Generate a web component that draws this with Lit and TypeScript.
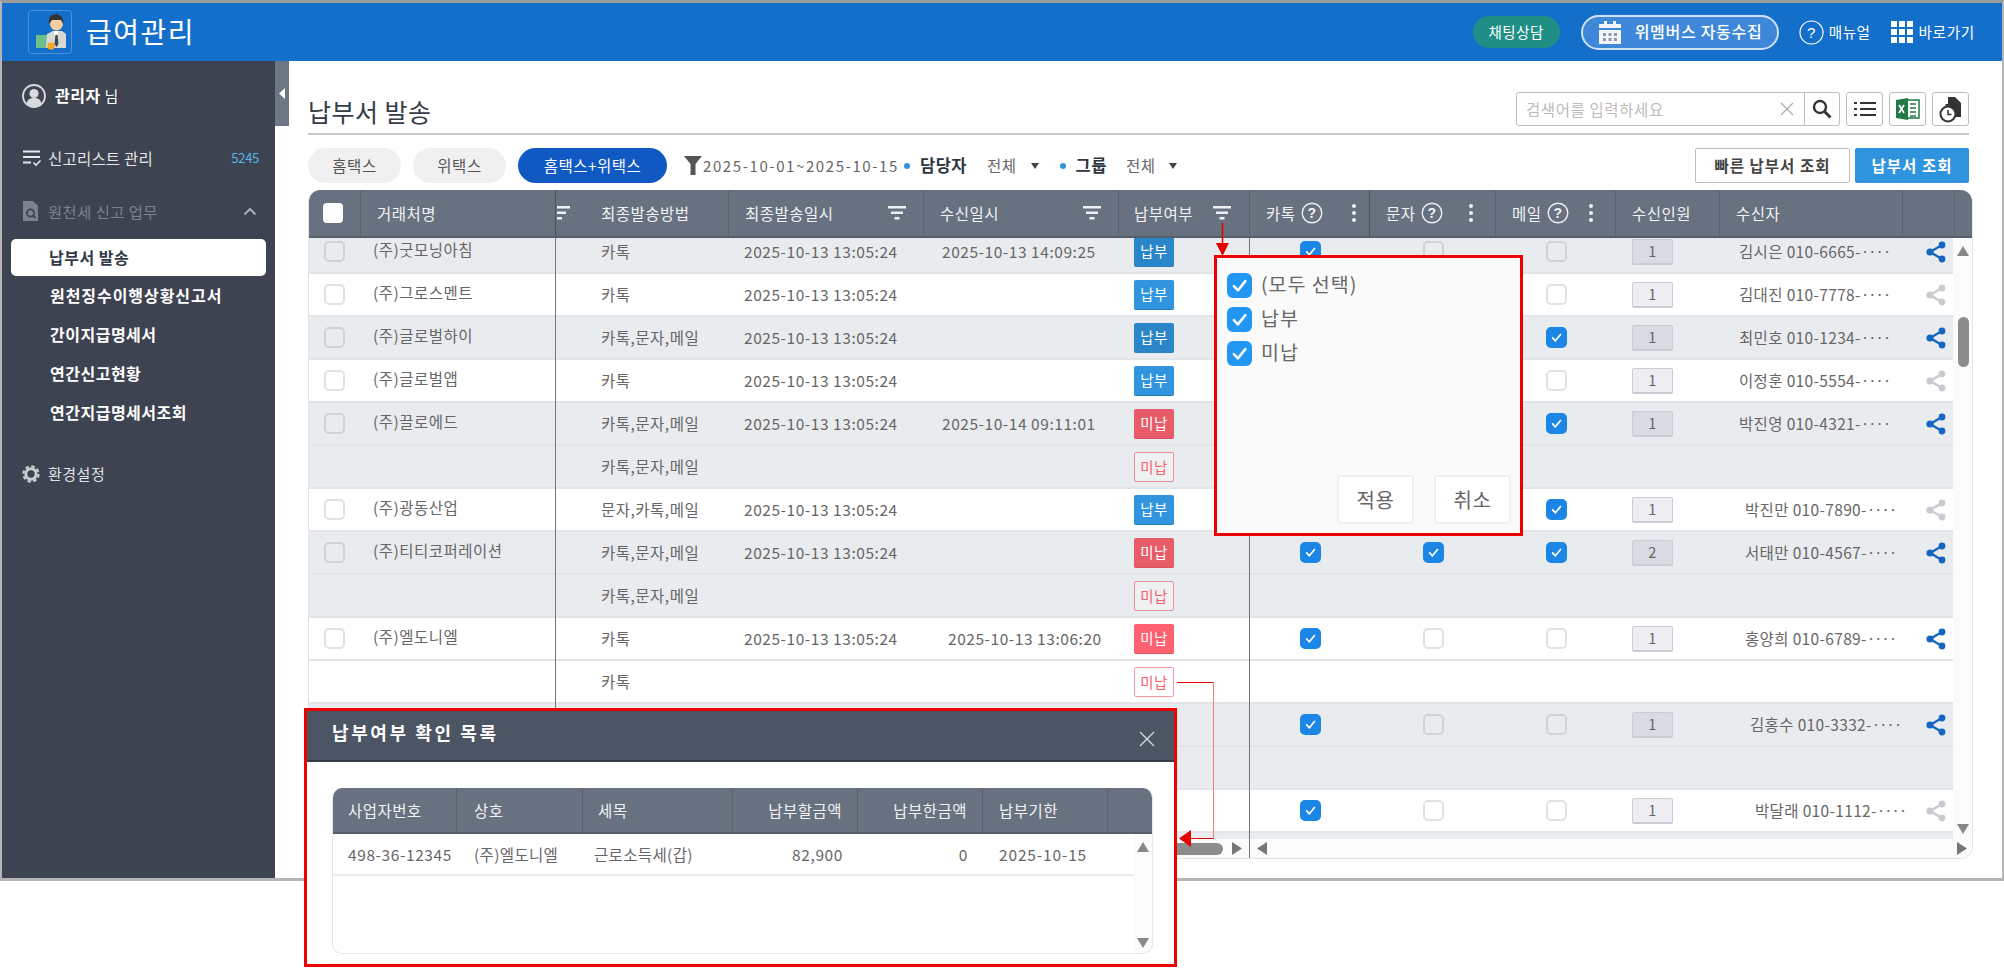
import { LitElement, css, html, svg } from "lit";
import { customElement } from "lit/decorators.js";
import { classMap } from "lit/directives/class-map.js";

interface Row {
  name?: string;
  method?: string;
  sent?: string;
  recv?: string;
  recvPad?: number;
  status?: "paid" | "unpaid" | "pending";
  kakao?: boolean;
  sms?: boolean;
  mail?: boolean;
  count?: number;
  to?: string;
  toPad?: number;
  shared?: boolean;
  gray?: boolean;
}

const SENT = "2025-10-13 13:05:24";

const ROWS: Row[] = [
  { name: "(주)굿모닝아침", method: "카톡", sent: SENT, recv: "2025-10-13 14:09:25", recvPad: 18, status: "paid", kakao: true, sms: false, mail: false, count: 1, to: "김시은 010-6665-", toPad: 19, shared: true, gray: true },
  { name: "(주)그로스멘트", method: "카톡", sent: SENT, status: "paid", kakao: true, sms: false, mail: false, count: 1, to: "김대진 010-7778-", toPad: 19, shared: false },
  { name: "(주)글로벌하이", method: "카톡,문자,메일", sent: SENT, status: "paid", kakao: true, sms: true, mail: true, count: 1, to: "최민호 010-1234-", toPad: 19, shared: true, gray: true },
  { name: "(주)글로벌앱", method: "카톡", sent: SENT, status: "paid", kakao: true, sms: false, mail: false, count: 1, to: "이정훈 010-5554-", toPad: 19, shared: false },
  { name: "(주)끌로에드", method: "카톡,문자,메일", sent: SENT, recv: "2025-10-14 09:11:01", recvPad: 18, status: "unpaid", kakao: true, sms: true, mail: true, count: 1, to: "박진영 010-4321-", toPad: 19, shared: true, gray: true },
  { method: "카톡,문자,메일", status: "pending", gray: true },
  { name: "(주)광동산업", method: "문자,카톡,메일", sent: SENT, status: "paid", kakao: true, sms: true, mail: true, count: 1, to: "박진만 010-7890-", toPad: 25, shared: false },
  { name: "(주)티티코퍼레이션", method: "카톡,문자,메일", sent: SENT, status: "unpaid", kakao: true, sms: true, mail: true, count: 2, to: "서태만 010-4567-", toPad: 25, shared: true, gray: true },
  { method: "카톡,문자,메일", status: "pending", gray: true },
  { name: "(주)엘도니엘", method: "카톡", sent: SENT, recv: "2025-10-13 13:06:20", recvPad: 24, status: "unpaid", kakao: true, sms: false, mail: false, count: 1, to: "홍양희 010-6789-", toPad: 25, shared: true },
  { method: "카톡", status: "pending" },
  { kakao: true, sms: false, mail: false, count: 1, to: "김홍수 010-3332-", toPad: 30, shared: true, gray: true },
  { gray: true },
  { kakao: true, sms: false, mail: false, count: 1, to: "박달래 010-1112-", toPad: 35, shared: false },
  { gray: true },
];

const check = () => svg`<svg viewBox="0 0 20 20" width="100%" height="100%"><path d="M5.5 10.5l3.2 3.4 6-7.4" fill="none" stroke="#fff" stroke-width="2" stroke-linecap="round" stroke-linejoin="round"/></svg>`;

const filterIcon = (left = false) =>
  left
    ? svg`<svg class="ficon" width="18" height="14" viewBox="0 0 18 14"><path d="M0 0h13v2.500H0zM0 5.500h9V8H0zM0 11h5v2.500H0z" fill="#eef0f3"/></svg>`
    : svg`<svg class="ficon" width="18" height="14" viewBox="0 0 18 14"><path d="M0 0h18v2.500H0zM3 5.500h12V8H3zM6.500 11h5v2.500h-5z" fill="#eef0f3"/></svg>`;

const helpIcon = () => svg`<svg class="help" width="22" height="22" viewBox="0 0 22 22"><circle cx="11" cy="11" r="9.800" fill="none" stroke="#eef0f3" stroke-width="1.400"/><text x="11" y="16" text-anchor="middle" font-size="14" font-weight="700" font-family="Liberation Sans, sans-serif" fill="#eef0f3">?</text></svg>`;

const kebab = () => svg`<svg class="kebab" width="6" height="20" viewBox="0 0 6 20"><circle cx="3" cy="3" r="2" fill="#eef0f3"/><circle cx="3" cy="10" r="2" fill="#eef0f3"/><circle cx="3" cy="17" r="2" fill="#eef0f3"/></svg>`;

const shareIcon = (on: boolean) => {
  const c = on ? "#1666c1" : "#c9cbd0";
  return svg`<svg width="20" height="22" viewBox="0 0 20 22"><path d="M16 4L4 11l12 7" fill="none" stroke="${c}" stroke-width="2.400"/><circle cx="16" cy="4" r="3.400" fill="${c}"/><circle cx="4" cy="11" r="3.600" fill="${c}"/><circle cx="16" cy="18" r="3.400" fill="${c}"/></svg>`;
};

const triUp = (c = "#888") => svg`<svg width="12" height="10" viewBox="0 0 12 10"><path d="M6 0l6 10H0z" fill="${c}"/></svg>`;
const triDown = (c = "#888") => svg`<svg width="12" height="10" viewBox="0 0 12 10"><path d="M0 0h12L6 10z" fill="${c}"/></svg>`;
const triLeft = (c = "#777") => svg`<svg width="10" height="13" viewBox="0 0 10 13"><path d="M10 0v13L0 6.500z" fill="${c}"/></svg>`;
const triRight = (c = "#777") => svg`<svg width="10" height="13" viewBox="0 0 10 13"><path d="M0 0l10 6.500L0 13z" fill="${c}"/></svg>`;

@customElement("app-root")
export class AppRoot extends LitElement {
  static styles = css`
    :host {
      display: block;
      position: relative;
      width: 2004px;
      height: 968px;
      overflow: hidden;
      background: #fff;
      font-family: "Noto Sans CJK KR", "Noto Sans", sans-serif;
      letter-spacing: 0.5px;
      line-height: 1.2;
      color: #666;
    }
    svg { display: block; flex: none; }

    .frame {
      box-sizing: border-box;
      width: 2004px;
      height: 881px;
      border: 2px solid #b5b5b5;
      border-top: 3px solid #9a9a9a;
      border-bottom-width: 3px;
      display: flex;
      flex-direction: column;
    }

    /* top bar */
    .topbar {
      height: 58px;
      flex: none;
      background: #146fcb;
      display: flex;
      align-items: center;
      padding: 0 27px 0 26px;
      color: #fff;
    }
    .logo {
      box-sizing: border-box;
      width: 44px;
      height: 44px;
      border: 1px solid #4c93dc;
      border-radius: 4px;
    }
    .app-title { margin-left: 14px; font-size: 28px; letter-spacing: 1.5px; }
    .top-right { margin-left: auto; display: flex; align-items: center; }
    .chat {
      width: 87px;
      height: 32px;
      border-radius: 16px;
      background: #1f8f85;
      display: flex;
      align-items: center;
      justify-content: center;
      font-size: 14.5px;
    }
    .wemembers {
      box-sizing: border-box;
      width: 198px;
      height: 35px;
      margin-left: 21px;
      border: 2px solid #cfe0f4;
      border-radius: 18px;
      background: #3f88d9;
      display: flex;
      align-items: center;
      padding-left: 16px;
      gap: 14px;
      font-size: 16px;
      font-weight: 500;
      letter-spacing: 0.7px;
    }
    .top-link { display: flex; align-items: center; gap: 5px; font-size: 14.6px; }
    .manual { margin-left: 20px; }
    .shortcut { margin-left: 21px; letter-spacing: 0.7px; }

    .body { flex: 1; min-height: 0; display: flex; }

    /* sidebar */
    .side {
      width: 273px;
      flex: none;
      background: #3d4350;
      box-sizing: border-box;
      padding-top: 23px;
      color: #e4e6ea;
      display: flex;
      flex-direction: column;
    }
    .side-row {
      height: 24px;
      display: flex;
      align-items: center;
      padding-left: 20px;
      font-size: 15.5px;
    }
    .user { gap: 9px; color: #fff; font-size: 15px; }
    .user b { font-weight: 700; font-size: 16px; }
    .report { margin-top: 38px; gap: 6px; letter-spacing: 0.2px; }
    .count {
      margin-left: auto;
      margin-right: 16px;
      color: #59b4e6;
      font-size: 13px;
      letter-spacing: -0.3px;
    }
    .tax { margin-top: 29px; gap: 9px; color: #7d838e; font-size: 15.3px; }
    .tax svg:last-child { margin-left: auto; margin-right: 18px; }
    .sub-active {
      margin: 16px 9px 0 9px;
      height: 37px;
      border-radius: 5px;
      background: #fff;
      color: #333b48;
      font-weight: 700;
      font-size: 16px;
      display: flex;
      align-items: center;
      padding-left: 38px;
    }
    .sub {
      height: 39px;
      display: flex;
      align-items: center;
      padding-left: 48px;
      color: #fff;
      font-weight: 700;
      font-size: 16px;
    }
    .sub.long { letter-spacing: 0.95px; }
    .settings { margin-top: 30px; gap: 8px; font-size: 15px; color: #dfe1e5; }

    /* main */
    .main {
      flex: 1;
      min-width: 0;
      position: relative;
      box-sizing: border-box;
      padding: 31px 29px 0 33px;
    }
    .collapse {
      position: absolute;
      left: 0;
      top: 0;
      width: 14px;
      height: 65px;
      background: #6d7684;
      display: flex;
      align-items: center;
      justify-content: center;
    }
    .title-row {
      margin-right: 4px;
      height: 34px;
      padding-bottom: 7px;
      border-bottom: 2px solid #c8c8c8;
      display: flex;
      align-items: center;
    }
    .page-title { font-size: 25px; color: #333c48; margin-top: 4px; }
    .search {
      margin-left: auto;
      box-sizing: border-box;
      width: 324px;
      height: 34px;
      border: 1.5px solid #bdbdbd;
      border-radius: 3px;
      display: flex;
      align-items: center;
    }
    .search-text { flex: 1; padding-left: 9px; font-size: 15.5px; color: #bbb; letter-spacing: 0.6px; }
    .search-btn {
      width: 34px;
      height: 100%;
      margin-left: 10px;
      border-left: 1.5px solid #bdbdbd;
      display: flex;
      align-items: center;
      justify-content: center;
    }
    .tool {
      box-sizing: border-box;
      width: 37px;
      height: 34px;
      margin-left: 6px;
      border: 1.5px solid #bdbdbd;
      border-radius: 3px;
      display: flex;
      align-items: center;
      justify-content: center;
    }

    .filters {
      margin: 13px 4px 7px 0;
      height: 35px;
      display: flex;
      align-items: center;
      font-size: 15px;
    }
    .pill {
      width: 93px;
      height: 35px;
      margin-right: 12px;
      border-radius: 18px;
      background: #f0f0f0;
      color: #555;
      font-size: 15.5px;
      display: flex;
      align-items: center;
      justify-content: center;
    }
    .pill.on { width: 149px; background: #1159c2; color: #fff; margin-right: 17px; }
    .range { margin-left: 1px; letter-spacing: 1.6px; font-size: 15px; color: #666; }
    .dot { width: 6px; height: 6px; border-radius: 50%; background: #2f93dd; }
    .dot.first { margin-left: 5px; }
    .dot.second { margin-left: 21px; }
    .f-label { margin-left: 10px; font-weight: 700; color: #2d3540; font-size: 16.5px; }
    .f-val { margin-left: 20px; color: #666; font-size: 15.5px; }
    .f-val.second { margin-left: 19px; }
    .caret {
      margin-left: 14px;
      width: 0;
      height: 0;
      border: 4.5px solid transparent;
      border-top: 6px solid #444;
      border-bottom: 0;
    }
    .btn-quick, .btn-query {
      box-sizing: border-box;
      height: 35px;
      display: flex;
      align-items: center;
      justify-content: center;
      border-radius: 2px;
      font-size: 15.5px;
      font-weight: 700;
      letter-spacing: 1px;
    }
    .btn-quick { width: 155px; margin-left: auto; border: 1.5px solid #bdbdbd; color: #444; }
    .btn-query { width: 114px; margin-left: 5px; background: #2f93dd; color: #fff; }

    /* grid */
    .grid {
      box-sizing: border-box;
      width: 1665px;
      height: 669px;
      border: 1px solid #e3e5e8;
      border-top: 0;
      border-radius: 12px 12px 12px 0;
      display: flex;
      flex-direction: column;
      overflow: hidden;
    }
    .g-head {
      height: 48px;
      flex: none;
      background: #687180;
      border-bottom: 2px solid #565e6b;
      box-sizing: border-box;
      display: grid;
      grid-template-columns: 52px 195px 29px 144px 195px 195px 131px 120px 126px 120px 104px 183px 52px 17px;
      color: #f1f2f4;
      font-size: 15.5px;
    }
    .hc {
      border-right: 1px solid #5b6370;
      display: flex;
      align-items: center;
      min-width: 0;
    }
    .hc.pad { padding-left: 16px; }
    .hc.spaced { justify-content: space-between; padding-right: 16px; }
    .hc.status { padding-left: 15px; padding-right: 17px; }
    .hc.plain { border-right: 0; padding-left: 1px; overflow: hidden; }
    .hc.freeze { border-right-color: #4a515c; }
    .hc.last { border-right: 0; }
    .hc .ficon { margin-right: 1px; }
    .hc .help { margin-left: 5px; margin-right: auto; }
    .hc .kebab { margin-right: 21px; }
    .hc.first-channel .kebab { margin-right: 12px; }
    .head-check { justify-content: center; padding-right: 3px; }
    .head-check i {
      display: block;
      width: 20px;
      height: 20px;
      border-radius: 4px;
      background: #fff;
    }

    .g-mid { height: 601px; flex: none; display: flex; }
    .g-rows { width: 1644px; overflow: hidden; }
    .g-inner { margin-top: -7px; }
    .row {
      height: 43px;
      box-sizing: border-box;
      border-bottom: 2px solid #e2e4e8;
      display: grid;
      grid-template-columns: 52px 195px 29px 144px 195px 195px 131px 120px 126px 120px 104px 183px 50px;
      background: #fff;
      font-size: 15.5px;
      color: #666;
    }
    .row.gray { background: #e9ecef; }
    .c { display: flex; align-items: center; min-width: 0; white-space: nowrap; }
    .c.check { justify-content: center; padding-right: 2px; }
    .c.name { padding-left: 12px; border-right: 1px solid #6e7683; margin-top: -2px; padding-bottom: 2px; }
    .c.method { padding-left: 16px; }
    .c.date { padding-left: 15px; letter-spacing: 0.55px; }
    .c.recv { letter-spacing: 0.55px; }
    .c.status { padding-left: 15px; border-right: 1px solid #6e7683; margin-top: -2px; padding-bottom: 2px; }
    .c.cb-cell { justify-content: center; }
    .c.num { padding-left: 16px; }
    .c.to { letter-spacing: 0.35px; }
    .c.to .dots { letter-spacing: -1.4px; }
    .c.share { padding-left: 23px; }

    .cb {
      box-sizing: border-box;
      width: 21px;
      height: 21px;
      border-radius: 5px;
      border: 2px solid #dfe1e5;
      background: #fff;
    }
    .gray .cb { background: transparent; border-color: #cfd2d7; }
    .cb.on, .gray .cb.on { background: #1c86e6; border-color: #1c86e6; }

    .badge {
      box-sizing: border-box;
      width: 40px;
      height: 30px;
      margin-top: 4px;
      border-radius: 2px;
      display: flex;
      align-items: center;
      justify-content: center;
      font-size: 14.5px;
      letter-spacing: 0.3px;
      color: #fff;
    }
    .badge.paid { background: #3095de; border-bottom: 1px solid #2a7fbd; }
    .gray .badge.paid { background: #2a86c8; }
    .badge.unpaid { background: #ff6170; border-bottom: 1px solid #d9505c; }
    .gray .badge.unpaid { background: #e85b68; }
    .badge.pending { background: #fff; border: 1.5px solid #f79aa2; color: #f4636f; }
    .gray .badge.pending { background: #eef0f2; border-color: #ef8e97; }

    .num-box {
      box-sizing: border-box;
      width: 41px;
      height: 26px;
      border: 1px solid #c9ccd2;
      border-bottom-width: 2px;
      border-radius: 2px;
      background: #eeeef2;
      display: flex;
      align-items: center;
      justify-content: center;
      font-size: 14.5px;
    }
    .gray .num-box { background: #d9dbe3; }

    .v-scroll {
      flex: 1;
      background: #fbfbfb;
      display: flex;
      flex-direction: column;
      align-items: center;
      padding: 8px 0 5px;
      position: relative;
    }
    .v-thumb {
      position: absolute;
      top: 79px;
      left: 5px;
      width: 11px;
      height: 50px;
      border-radius: 6px;
      background: #8c8c8c;
    }
    .v-scroll svg:last-child { margin-top: auto; }

    .h-scroll {
      flex: 1;
      display: flex;
      align-items: center;
      background: #fbfbfb;
      font-size: 0;
    }
    .h-left {
      width: 941px;
      height: 100%;
      display: flex;
      align-items: center;
      justify-content: flex-end;
      padding-right: 7px;
      box-sizing: border-box;
      border-right: 1px solid #6e7683;
    }
    .h-thumb { width: 200px; height: 12px; border-radius: 6px; background: #8c8c8c; margin-right: 9px; }
    .h-right { flex: 1; display: flex; align-items: center; justify-content: space-between; padding: 0 5px 0 7px; }

    /* filter popup */
    .popup {
      position: absolute;
      left: 1214px;
      top: 255px;
      width: 309px;
      height: 281px;
      box-sizing: border-box;
      border: 3px solid #ec0000;
      background: #fafafa;
      padding: 15px 9px 9px 10px;
      display: flex;
      flex-direction: column;
      gap: 9px;
    }
    .opt {
      display: flex;
      align-items: center;
      gap: 9px;
      height: 25px;
      font-size: 19.5px;
      letter-spacing: 1px;
      color: #666;
    }
    .opt span { margin-top: -3px; }
    .opt i {
      display: block;
      width: 25px;
      height: 25px;
      border-radius: 6px;
      background: #2196f3;
    }
    .pop-btns { margin-top: auto; display: flex; justify-content: flex-end; gap: 20px; }
    .pop-btn {
      box-sizing: border-box;
      width: 77px;
      height: 49px;
      border: 2px solid #efefef;
      border-radius: 4px;
      background: #fff;
      display: flex;
      align-items: center;
      justify-content: center;
      font-size: 20px;
      color: #666;
    }

    /* modal */
    .modal {
      position: absolute;
      left: 304px;
      top: 708px;
      width: 873px;
      height: 259px;
      box-sizing: border-box;
      border: 3px solid #ec0000;
      background: #fff;
      display: flex;
      flex-direction: column;
    }
    .m-head {
      height: 51px;
      flex: none;
      box-sizing: border-box;
      background: #4b5563;
      border-bottom: 2px solid #343c47;
      display: flex;
      align-items: center;
      justify-content: space-between;
      padding: 0 19px 0 25px;
      color: #fff;
    }
    .m-title { font-size: 18px; font-weight: 700; letter-spacing: 2.6px; margin-top: -6px; }
    .m-head svg { margin-top: 6px; }
    .m-body { flex: 1; padding: 26px 21px 10px 25px; min-height: 0; display: flex; }
    .m-grid {
      flex: 1;
      box-sizing: border-box;
      border: 1px solid #e5e7ea;
      border-top: 0;
      border-radius: 10px;
      overflow: hidden;
      display: flex;
      flex-direction: column;
    }
    .m-cols { display: grid; grid-template-columns: 124px 126px 150px 125px 125px 125px 1fr; }
    .m-hrow {
      height: 46px;
      box-sizing: border-box;
      background: #687180;
      border-bottom: 2px solid #565e6b;
      color: #f1f2f4;
      font-size: 15.5px;
    }
    .m-hrow > div { border-right: 1px solid #5b6370; display: flex; align-items: center; padding: 0 15px; }
    .m-hrow > div:last-child { border-right: 0; }
    .m-hrow > div:nth-child(4), .m-hrow > div:nth-child(5) { justify-content: flex-end; }
    .m-hrow > div:nth-child(2) { padding-left: 17px; }
    .m-hrow > div:nth-child(6) { padding-left: 16px; }
    .m-main { flex: 1; min-height: 0; display: flex; }
    .m-rows { flex: 1; min-width: 0; }
    .m-row {
      height: 42px;
      box-sizing: border-box;
      border-bottom: 2px solid #e9ebee;
      font-size: 15.5px;
      color: #666;
      grid-template-columns: 124px 126px 150px 125px 125px 125px;
    }
    .m-row > div { display: flex; align-items: center; padding: 0 15px; white-space: nowrap; letter-spacing: 0.6px; }
    .m-row > div:nth-child(2) { padding-left: 17px; letter-spacing: 0.35px; }
    .m-row > div:nth-child(3) { padding-left: 11px; letter-spacing: 0.35px; }
    .m-row > div:nth-child(4), .m-row > div:nth-child(5) { justify-content: flex-end; }
    .m-row > div:nth-child(6) { padding-left: 16px; letter-spacing: 0.85px; }
    .m-bar {
      width: 18px;
      flex: none;
      background: #fbfbfb;
      display: flex;
      flex-direction: column;
      align-items: center;
      justify-content: space-between;
      padding: 8px 0 5px;
      box-sizing: border-box;
    }

    .arrows { position: absolute; left: 0; top: 0; pointer-events: none; }
  `;

  private renderLogo() {
    return html`<div class="logo">
      <svg width="42" height="42" viewBox="0 0 42 42">
        <rect x="7" y="24" width="19" height="13" fill="#6cc08b"/>
        <path d="M17 37l1-14 6-3h9l4 3v14z" fill="#d9d9d4"/>
        <path d="M24 20l3 6 3-6z" fill="#fff"/>
        <path d="M26.500 24h2l1 9-2 3-2-3z" fill="#3d4350"/>
        <circle cx="27.500" cy="13" r="6.500" fill="#f4cf9f"/>
        <path d="M20 13c-1-6 2-10 5-9l3-2 1 2c4 0 6 4 5 9l-2-4h-9z" fill="#333"/>
        <circle cx="22" cy="35" r="3.800" fill="#f3a82d"/>
      </svg>
    </div>`;
  }

  private renderSidebar() {
    return html`<nav class="side">
      <div class="side-row user">
        <svg width="24" height="24" viewBox="0 0 24 24">
          <circle cx="12" cy="12" r="11" fill="none" stroke="#d8dadd" stroke-width="1.800"/>
          <circle cx="12" cy="9.500" r="4.600" fill="#d8dadd"/>
          <path d="M4.500 19.500c1-4.500 4-5.500 7.500-5.500s6.500 1 7.500 5.500c-2 2-4.500 3-7.500 3s-5.500-1-7.500-3z" fill="#d8dadd"/>
        </svg>
        <span><b>관리자</b> 님</span>
      </div>
      <div class="side-row report">
        <svg width="20" height="18" viewBox="0 0 20 18">
          <path d="M1 2.500h17M1 8h17M1 13.500h8" stroke="#e4e6ea" stroke-width="2" fill="none"/>
          <path d="M11.500 13.500l2.500 2.500 4.500-4.500" stroke="#e4e6ea" stroke-width="1.600" fill="none"/>
        </svg>
        <span>신고리스트 관리</span><span class="count">5245</span>
      </div>
      <div class="side-row tax">
        <svg width="17" height="22" viewBox="0 0 17 22">
          <path d="M1 1h10l5 5v15H1z" fill="#7d838e"/>
          <circle cx="8.500" cy="13" r="3.600" fill="none" stroke="#3d4350" stroke-width="1.800"/>
          <path d="M11 15.500l2.500 2.500" stroke="#3d4350" stroke-width="1.800"/>
        </svg>
        <span>원천세 신고 업무</span>
        <svg width="14" height="9" viewBox="0 0 14 9"><path d="M1.500 7.500L7 2l5.500 5.500" fill="none" stroke="#a8adb5" stroke-width="2"/></svg>
      </div>
      <div class="sub-active">납부서 발송</div>
      <div class="sub long">원천징수이행상황신고서</div>
      <div class="sub">간이지급명세서</div>
      <div class="sub">연간신고현황</div>
      <div class="sub">연간지급명세서조회</div>
      <div class="side-row settings">
        <svg width="18" height="18" viewBox="0 0 18 18">
          <circle cx="9" cy="9" r="5.200" fill="none" stroke="#c9ccd1" stroke-width="3"/>
          <circle cx="9" cy="9" r="7.600" fill="none" stroke="#c9ccd1" stroke-width="2.200" stroke-dasharray="3.500 2.470"/>
        </svg>
        <span>환경설정</span>
      </div>
    </nav>`;
  }

  private renderTitleRow() {
    return html`<div class="title-row">
      <div class="page-title">납부서 발송</div>
      <div class="search">
        <span class="search-text">검색어를 입력하세요</span>
        <svg width="14" height="14" viewBox="0 0 14 14"><path d="M1 1l12 12M13 1L1 13" stroke="#aaa" stroke-width="1.200"/></svg>
        <div class="search-btn">
          <svg width="20" height="20" viewBox="0 0 20 20"><circle cx="8" cy="8" r="6" fill="none" stroke="#333" stroke-width="2.400"/><path d="M12.500 12.500l6 6" stroke="#333" stroke-width="3"/></svg>
        </div>
      </div>
      <div class="tool">
        <svg width="22" height="16" viewBox="0 0 22 16"><path d="M6 2h16M6 8h16M6 14h16" stroke="#333" stroke-width="2"/><path d="M0 1h3v2H0zM0 7h3v2H0zM0 13h3v2H0z" fill="#333"/></svg>
      </div>
      <div class="tool">
        <svg width="26" height="24" viewBox="0 0 26 24">
          <path d="M8 3h16v18H8z" fill="#fff" stroke="#1f7a45" stroke-width="1.500"/>
          <path d="M15 7h6M15 11h6M15 15h6M15 19h6" stroke="#1f7a45" stroke-width="1.500"/>
          <path d="M1 3l12-2v22L1 21z" fill="#1f7a45"/>
          <path d="M4 8l5 8M9 8l-5 8" stroke="#fff" stroke-width="1.700"/>
        </svg>
      </div>
      <div class="tool">
        <svg width="24" height="27" viewBox="0 0 24 27">
          <path d="M9 1h7l6 6v14H9z" fill="#333"/>
          <circle cx="9" cy="18" r="7.500" fill="#fff" stroke="#333" stroke-width="2"/>
          <path d="M9 14v4.500h3.500" fill="none" stroke="#333" stroke-width="1.500"/>
          <path d="M6.500 8h5v2h-5z" fill="#333"/>
        </svg>
      </div>
    </div>`;
  }

  private renderFilters() {
    return html`<div class="filters">
      <div class="pill">홈택스</div>
      <div class="pill">위택스</div>
      <div class="pill on">홈택스+위택스</div>
      <svg width="18" height="19" viewBox="0 0 18 19"><path d="M0 0h18l-6.500 8v11h-5V8z" fill="#555"/></svg>
      <span class="range">2025-10-01~2025-10-15</span>
      <i class="dot first"></i>
      <span class="f-label">담당자</span>
      <span class="f-val">전체</span>
      <i class="caret"></i>
      <i class="dot second"></i>
      <span class="f-label">그룹</span>
      <span class="f-val second">전체</span>
      <i class="caret"></i>
      <div class="btn-quick">빠른 납부서 조회</div>
      <div class="btn-query">납부서 조회</div>
    </div>`;
  }

  private renderHead() {
    return html`<div class="g-head">
      <div class="hc head-check"><i></i></div>
      <div class="hc pad freeze">거래처명</div>
      <div class="hc plain">${filterIcon(true)}</div>
      <div class="hc pad">최종발송방법</div>
      <div class="hc pad spaced">최종발송일시${filterIcon()}</div>
      <div class="hc pad spaced">수신일시${filterIcon()}</div>
      <div class="hc spaced status">납부여부${filterIcon()}</div>
      <div class="hc pad freeze first-channel">카톡${helpIcon()}${kebab()}</div>
      <div class="hc pad">문자${helpIcon()}${kebab()}</div>
      <div class="hc pad">메일${helpIcon()}${kebab()}</div>
      <div class="hc pad">수신인원</div>
      <div class="hc pad">수신자</div>
      <div class="hc"></div>
      <div class="hc last"></div>
    </div>`;
  }

  private renderRow(r: Row) {
    const hasChannels = r.count !== undefined;
    return html`<div class=${classMap({ row: true, gray: !!r.gray })}>
      <div class="c check">${r.name ? html`<div class="cb"></div>` : ""}</div>
      <div class="c name">${r.name ?? ""}</div>
      <div class="c"></div>
      <div class="c method">${r.method ?? ""}</div>
      <div class="c date">${r.sent ?? ""}</div>
      <div class="c recv" style="padding-left:${r.recvPad ?? 0}px">${r.recv ?? ""}</div>
      <div class="c status">
        ${r.status
          ? html`<div class="badge ${r.status}">${r.status === "paid" ? "납부" : "미납"}</div>`
          : ""}
      </div>
      <div class="c cb-cell">${hasChannels ? this.renderCheck(r.kakao) : ""}</div>
      <div class="c cb-cell">${hasChannels ? this.renderCheck(r.sms) : ""}</div>
      <div class="c cb-cell">${hasChannels ? this.renderCheck(r.mail) : ""}</div>
      <div class="c num">${hasChannels ? html`<div class="num-box">${r.count}</div>` : ""}</div>
      <div class="c to" style="padding-left:${r.toPad ?? 0}px">
        ${r.to ? html`<span>${r.to}<span class="dots">····</span></span>` : ""}
      </div>
      <div class="c share">${hasChannels ? shareIcon(!!r.shared) : ""}</div>
    </div>`;
  }

  private renderCheck(on?: boolean) {
    return html`<div class=${classMap({ cb: true, on: !!on })}>${on ? check() : ""}</div>`;
  }

  private renderGrid() {
    return html`<div class="grid">
      ${this.renderHead()}
      <div class="g-mid">
        <div class="g-rows"><div class="g-inner">${ROWS.map((r) => this.renderRow(r))}</div></div>
        <div class="v-scroll">${triUp()}<div class="v-thumb"></div>${triDown()}</div>
      </div>
      <div class="h-scroll">
        <div class="h-left"><div class="h-thumb"></div>${triRight()}</div>
        <div class="h-right">${triLeft()}${triRight()}</div>
      </div>
    </div>`;
  }

  private renderPopup() {
    return html`<div class="popup">
      ${["(모두 선택)", "납부", "미납"].map(
        (label) => html`<div class="opt"><i>${check()}</i><span>${label}</span></div>`
      )}
      <div class="pop-btns">
        <div class="pop-btn">적용</div>
        <div class="pop-btn">취소</div>
      </div>
    </div>`;
  }

  private renderModal() {
    return html`<div class="modal">
      <div class="m-head">
        <span class="m-title">납부여부 확인 목록</span>
        <svg width="16" height="16" viewBox="0 0 16 16"><path d="M1 1l14 14M15 1L1 15" stroke="#d8dbe0" stroke-width="1.300"/></svg>
      </div>
      <div class="m-body">
        <div class="m-grid">
          <div class="m-cols m-hrow">
            <div>사업자번호</div><div>상호</div><div>세목</div><div>납부할금액</div><div>납부한금액</div><div>납부기한</div><div></div>
          </div>
          <div class="m-main">
            <div class="m-rows">
              <div class="m-cols m-row">
                <div>498-36-12345</div><div>(주)엘도니엘</div><div>근로소득세(갑)</div><div>82,900</div><div>0</div><div>2025-10-15</div>
              </div>
            </div>
            <div class="m-bar">${triUp()}${triDown()}</div>
          </div>
        </div>
      </div>
    </div>`;
  }

  render() {
    return html`
      <div class="frame">
        <header class="topbar">
          ${this.renderLogo()}
          <div class="app-title">급여관리</div>
          <div class="top-right">
            <div class="chat">채팅상담</div>
            <div class="wemembers">
              <svg width="22" height="24" viewBox="0 0 22 24">
                <path d="M0 4h22v20H0z" fill="#f2f5f9"/>
                <path d="M5 1h3v5H5zM14 1h3v5h-3z" fill="#f2f5f9"/>
                <path d="M0 8h22v2H0z" fill="#3f88d9"/>
                <path d="M4 13h3v3H4zM9.500 13h3v3h-3zM15 13h3v3h-3zM4 18h3v3H4zM9.500 18h3v3h-3zM15 18h3v3h-3z" fill="#8a98a8"/>
              </svg>
              <span>위멤버스 자동수집</span>
            </div>
            <div class="top-link manual">
              <svg width="25" height="25" viewBox="0 0 25 25"><circle cx="12.500" cy="12.500" r="11.500" fill="none" stroke="#fff" stroke-width="1.200"/><text x="12.500" y="18" text-anchor="middle" font-size="15" font-family="Liberation Sans, sans-serif" fill="#fff">?</text></svg>
              <span>매뉴얼</span>
            </div>
            <div class="top-link shortcut">
              <svg width="22" height="22" viewBox="0 0 22 22" fill="#fff">
                <path d="M0 0h6v6H0zM8 0h6v6H8zM16 0h6v6h-6zM0 8h6v6H0zM8 8h6v6H8zM16 8h6v6h-6zM0 16h6v6H0zM8 16h6v6H8zM16 16h6v6h-6z"/>
              </svg>
              <span>바로가기</span>
            </div>
          </div>
        </header>
        <div class="body">
          ${this.renderSidebar()}
          <main class="main">
            <div class="collapse">
              <svg width="6" height="11" viewBox="0 0 6 11"><path d="M6 0v11L0 5.500z" fill="#fff"/></svg>
            </div>
            ${this.renderTitleRow()}
            ${this.renderFilters()}
            ${this.renderGrid()}
          </main>
        </div>
      </div>
      ${this.renderPopup()}
      ${this.renderModal()}
      <svg class="arrows" width="2004" height="968" viewBox="0 0 2004 968">
        <path d="M1222.500 223V245" stroke="#e60000" stroke-width="1.500" fill="none"/>
        <path d="M1216 243h13l-6.500 13z" fill="#e60000"/>
        <path d="M1177 682.500h36.500" stroke="#e60000" fill="none"/>
        <path d="M1213.500 682.500V838.500" stroke="#f77" fill="none"/>
        <path d="M1213.500 838.500H1188" stroke="#e60000" fill="none"/>
        <path d="M1191 830v17l-12-8.500z" fill="#e60000"/>
      </svg>
    `;
  }
}
